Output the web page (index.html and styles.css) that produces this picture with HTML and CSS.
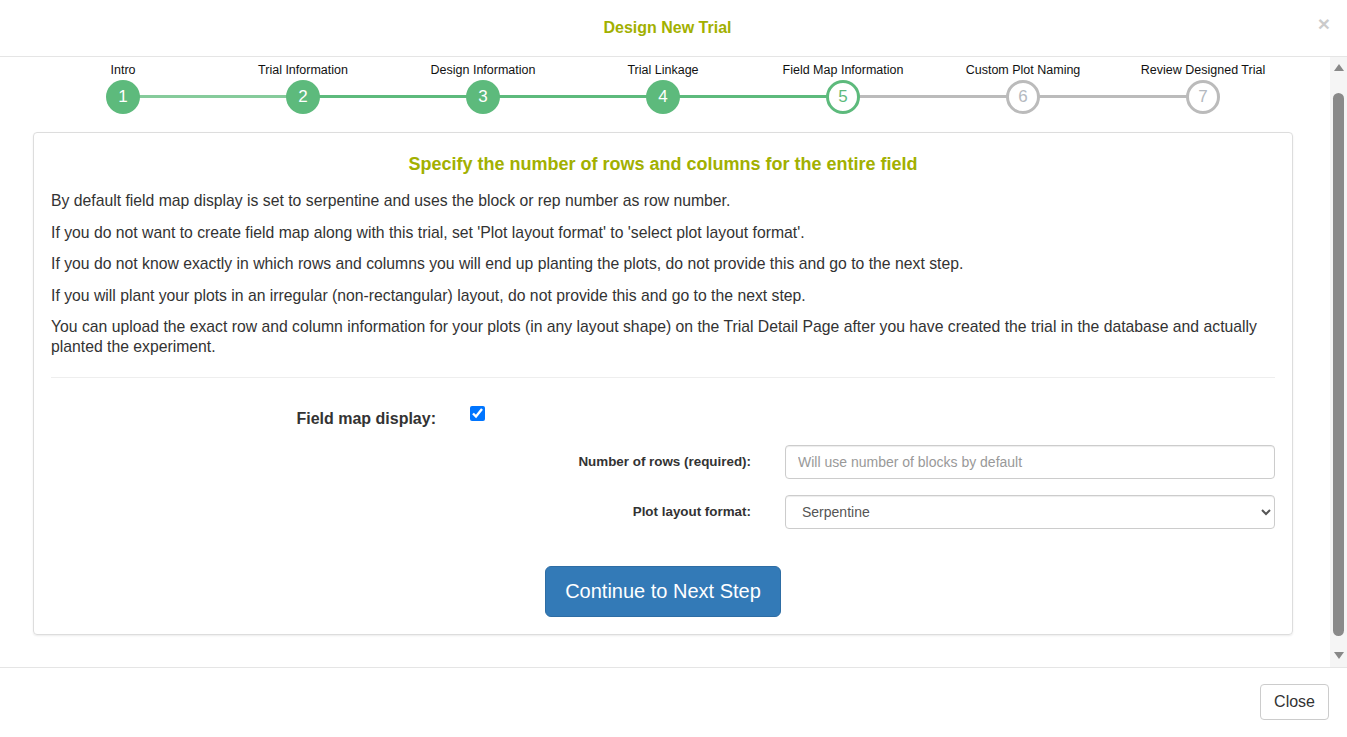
FILE: index.html
```html
<!DOCTYPE html>
<html lang="en">
<head>
<meta charset="utf-8">
<title>Design New Trial</title>
<link rel="stylesheet" href="styles.css">
</head>
<body>
<div class="modal">
  <header class="modal-header">
    <h4 class="modal-title">Design New Trial</h4>
    <button class="close" type="button">&times;</button>
  </header>
  <div class="modal-body-wrap">
    <div class="modal-body">
      <ol class="stepper">
        <li class="step done first"><span class="step-label">Intro</span><span class="step-circle">1</span></li>
        <li class="step done"><span class="step-label">Trial Information</span><span class="step-circle">2</span></li>
        <li class="step done"><span class="step-label">Design Information</span><span class="step-circle">3</span></li>
        <li class="step done"><span class="step-label">Trial Linkage</span><span class="step-circle">4</span></li>
        <li class="step current"><span class="step-label">Field Map Information</span><span class="step-circle">5</span></li>
        <li class="step todo"><span class="step-label">Custom Plot Naming</span><span class="step-circle">6</span></li>
        <li class="step todo last"><span class="step-label">Review Designed Trial</span><span class="step-circle">7</span></li>
      </ol>
      <section class="panel">
        <h3 class="panel-title">Specify the number of rows and columns for the entire field</h3>
        <p>By default field map display is set to serpentine and uses the block or rep number as row number.</p>
        <p>If you do not want to create field map along with this trial, set 'Plot layout format' to 'select plot layout format'.</p>
        <p>If you do not know exactly in which rows and columns you will end up planting the plots, do not provide this and go to the next step.</p>
        <p>If you will plant your plots in an irregular (non-rectangular) layout, do not provide this and go to the next step.</p>
        <p>You can upload the exact row and column information for your plots (in any layout shape) on the Trial Detail Page after you have created the trial in the database and actually planted the experiment.</p>
        <hr class="divider">
        <div class="form-row row-check">
          <label class="lbl-big" for="fm">Field map display:</label>
          <input id="fm" class="check" type="checkbox" checked>
        </div>
        <div class="form-row row-field">
          <label class="lbl-small" for="rows">Number of rows (required):</label>
          <input id="rows" class="control" type="text" placeholder="Will use number of blocks by default">
        </div>
        <div class="form-row row-field row-select">
          <label class="lbl-small" for="fmt">Plot layout format:</label>
          <select id="fmt" class="control select">
            <option>Serpentine</option>
          </select>
        </div>
        <div class="actions">
          <button class="btn-primary" type="button">Continue to Next Step</button>
        </div>
      </section>
    </div>
    <div class="scrollbar">
      <span class="arrow-up"></span>
      <span class="thumb"></span>
      <span class="arrow-down"></span>
    </div>
  </div>
  <footer class="modal-footer">
    <button class="btn-default" type="button">Close</button>
  </footer>
</div>
</body>
</html>
```
FILE: styles.css
```css
* { box-sizing: border-box; }
html, body { margin: 0; padding: 0; background: #fff; }
body {
  font-family: "Liberation Sans", Arial, sans-serif;
  color: #333;
  font-size: 14px;
  width: 1347px;
  height: 737px;
  overflow: hidden;
}
.modal {
  display: flex;
  flex-direction: column;
  height: 737px;
}
.modal-header {
  height: 57px;
  border-bottom: 1px solid #e5e5e5;
  display: flex;
  align-items: center;
  justify-content: center;
  position: relative;
  flex: none;
}
.modal-title {
  margin: 0 12px 0 0;
  font-size: 16px;
  font-weight: bold;
  color: #a2b000;
  line-height: 20px;
}
.close {
  position: absolute;
  right: 17px;
  top: 13px;
  border: 0;
  background: transparent;
  font-family: "Liberation Sans", Arial, sans-serif;
  font-size: 21px;
  font-weight: bold;
  line-height: 21px;
  color: #000;
  opacity: 0.2;
  padding: 0;
}
.modal-body-wrap {
  height: 610px;
  display: flex;
  flex: none;
}
.modal-body {
  flex: 1;
  padding: 6px 37px 0 33px;
  overflow: hidden;
}
.stepper {
  list-style: none;
  margin: 0;
  padding: 0;
  display: grid;
  grid-template-columns: repeat(7, 1fr);
}
.step {
  position: relative;
  display: flex;
  flex-direction: column;
  align-items: center;
}
.step::after {
  content: "";
  position: absolute;
  left: 50%;
  width: 100%;
  top: 32px;
  height: 3px;
  background: #5dba7c;
  z-index: 0;
}
.step.first::after { background: #86cb9b; }
.step.current::after, .step.todo::after { background: #bbbbbb; }
.step.last::after { display: none; }
.step-label {
  font-size: 12.5px;
  line-height: 14px;
  color: #111;
  white-space: nowrap;
}
.step-circle {
  margin-top: 3px;
  width: 34px;
  height: 34px;
  border-radius: 50%;
  display: flex;
  align-items: center;
  justify-content: center;
  font-size: 17px;
  position: relative;
  z-index: 1;
}
.done .step-circle { background: #5dba7c; color: #fff; }
.current .step-circle { background: #fff; border: 3px solid #5dba7c; color: #5dba7c; }
.todo .step-circle { background: #fff; border: 3px solid #bbbbbb; color: #b4b9c0; }

.panel {
  margin-top: 18px;
  border: 1px solid #dddddd;
  border-radius: 4px;
  box-shadow: 0 1px 2px rgba(0,0,0,0.08);
  padding: 20px 17px 17px;
}
.panel-title {
  margin: 0 0 16px;
  text-align: center;
  font-size: 18px;
  line-height: 22px;
  font-weight: bold;
  color: #a2b000;
}
.panel p {
  margin: 0 0 11.5px;
  line-height: 20px;
  font-size: 15.75px;
}
.divider {
  border: 0;
  border-top: 1px solid #eeeeee;
  margin: 20px 0 0;
}
.form-row { display: flex; gap: 34px; }
.row-check { margin-top: 24px; align-items: flex-start; }
.lbl-big {
  width: 385px;
  text-align: right;
  font-size: 16px;
  font-weight: bold;
  line-height: 20px;
  padding-top: 7px;
}
.check {
  margin: 4px 0 0;
  width: 15px;
  height: 15px;
}
.row-field { margin-top: 16px; align-items: center; }
.row-select { margin-top: 16px; }
.lbl-small {
  width: 700px;
  text-align: right;
  font-size: 13.4px;
  font-weight: bold;
  padding-bottom: 2px;
}
.control {
  flex: 1;
  height: 34px;
  border: 1px solid #cccccc;
  border-radius: 4px;
  padding: 6px 12px;
  font-family: "Liberation Sans", Arial, sans-serif;
  font-size: 14px;
  color: #555;
  background: #fff;
  box-shadow: inset 0 1px 1px rgba(0,0,0,0.075);
}
.control::placeholder { color: #999; }
.select { padding-left: 12px; }
.actions {
  margin-top: 37px;
  display: flex;
  justify-content: center;
}
.btn-primary {
  background: #337ab7;
  border: 1px solid #2e6da4;
  color: #fff;
  border-radius: 6px;
  font-family: "Liberation Sans", Arial, sans-serif;
  font-size: 20px;
  line-height: 27px;
  padding: 11px 19px;
  width: 236px;
}
.scrollbar {
  width: 17px;
  flex: none;
  background: #f5f5f5;
  display: flex;
  flex-direction: column;
  align-items: center;
  padding-top: 7px;
}
.arrow-up {
  width: 0; height: 0;
  border-left: 5px solid transparent;
  border-right: 5px solid transparent;
  border-bottom: 7px solid #888;
}
.thumb {
  margin-top: 22px;
  width: 11px;
  height: 543px;
  border-radius: 6px;
  background: #8a8a8a;
}
.arrow-down {
  margin-top: 16px;
  width: 0; height: 0;
  border-left: 5px solid transparent;
  border-right: 5px solid transparent;
  border-top: 7px solid #888;
}
.modal-footer {
  flex: 1;
  border-top: 1px solid #e5e5e5;
  display: flex;
  justify-content: flex-end;
  align-items: flex-start;
  padding: 16px 18px 0 0;
}
.btn-default {
  background: #fff;
  border: 1px solid #cccccc;
  border-radius: 4px;
  color: #333;
  font-family: "Liberation Sans", Arial, sans-serif;
  font-size: 16px;
  line-height: 22px;
  padding: 6px 13px;
}
```
